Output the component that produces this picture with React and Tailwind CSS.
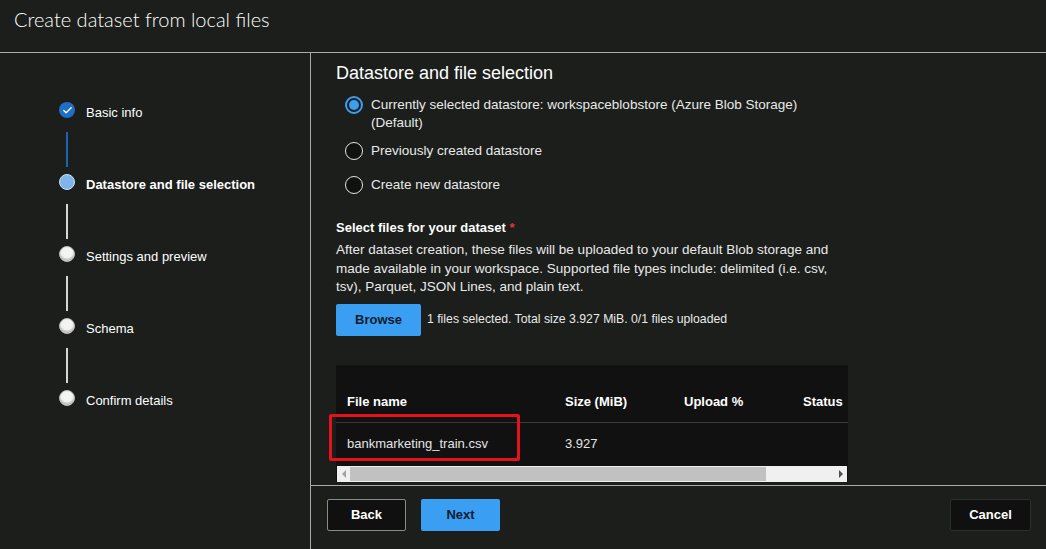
import { Check } from 'lucide-react';

const steps = [
  { label: 'Basic info', state: 'done' },
  { label: 'Datastore and file selection', state: 'current' },
  { label: 'Settings and preview', state: 'todo' },
  { label: 'Schema', state: 'todo' },
  { label: 'Confirm details', state: 'todo' },
];

const radios = [
  { label: 'Currently selected datastore: workspaceblobstore (Azure Blob Storage) (Default)', checked: true, gap: 'mt-0' },
  { label: 'Previously created datastore', checked: false, gap: 'mt-[10px]' },
  { label: 'Create new datastore', checked: false, gap: 'mt-[16px]' },
];

function StepDot({ state }) {
  if (state === 'done') {
    return (
      <span className="w-[16px] h-[16px] rounded-full bg-[#1f6fc4] flex items-center justify-center">
        <Check size={11} strokeWidth={3} color="#fff" />
      </span>
    );
  }
  if (state === 'current') {
    return <span className="w-[16px] h-[16px] rounded-full bg-[#7db4ea] border border-[#cfe3f7]" />;
  }
  return <span className="w-[16px] h-[16px] rounded-full bg-[#f4f4f4] border border-[#b9b9b9] shadow-[inset_0_-2px_2px_rgba(0,0,0,0.25)]" />;
}

function Radio({ checked }) {
  return checked ? (
    <span className="w-[18px] h-[18px] shrink-0 rounded-full border-2 border-[#3a9ff2] flex items-center justify-center">
      <span className="w-[10px] h-[10px] rounded-full bg-[#3a9ff2]" />
    </span>
  ) : (
    <span className="w-[18px] h-[18px] shrink-0 rounded-full border border-[#e6e6e6] bg-[#111]" />
  );
}

export default function App() {
  return (
    <div
      className="w-[1046px] h-[549px] bg-[#1b1e1b] text-white flex flex-col overflow-hidden"
      style={{ fontFamily: '"Liberation Sans", Arial, sans-serif' }}
    >
      {/* header */}
      <div className="h-[53px] border-b border-[#a9aaa8] pl-[14px] pt-[5px]">
        <h1 className="text-[20px] font-light leading-[28px]" style={{ fontFamily: 'Lato, sans-serif' }}>
          Create dataset from local files
        </h1>
      </div>

      <div className="flex flex-1 min-h-0">
        {/* sidebar steps */}
        <div className="w-[311px] border-r border-[#a9aaa8] pl-[59px] pt-[49px]">
          {steps.map((s, i) => (
            <div key={s.label}>
              <div className="flex items-center h-[16px]">
                <StepDot state={s.state} />
                <span className={`ml-[11px] text-[13px] mt-[6px] ${s.state === 'current' ? 'font-bold' : ''}`}>
                  {s.label}
                </span>
              </div>
              {i < steps.length - 1 && (
                <div
                  className={`ml-[7px] w-[2px] h-[35px] mt-[14px] mb-[7px] ${
                    i === 0 ? 'bg-[#1d62b3]' : 'bg-[#d6d6d6]'
                  }`}
                />
              )}
            </div>
          ))}
        </div>

        {/* main */}
        <div className="flex-1 flex flex-col min-w-0">
          <div className="flex-1 pl-[25px] pt-[8px]">
            <h2 className="text-[18px] leading-[25px]">Datastore and file selection</h2>

            <div className="mt-[10px] pl-[9px] flex flex-col">
              {radios.map((r) => (
                <label
                  key={r.label}
                  className={`flex items-start gap-[8px] text-[13.5px] leading-[18px] text-[#e9e9e9] ${r.gap}`}
                >
                  <Radio checked={r.checked} />
                  <span className="w-[440px]">{r.label}</span>
                </label>
              ))}
            </div>

            <div className="mt-[25px] w-[512px]">
              <div className="text-[13px] font-bold leading-[18px]">
                Select files for your dataset <span className="text-[#e0343a]">*</span>
              </div>
              <p className="mt-[4px] text-[13.5px] leading-[18.5px] text-[#e9e9e9]">
                After dataset creation, these files will be uploaded to your default Blob storage and made available in
                your workspace. Supported file types include: delimited (i.e. csv, tsv), Parquet, JSON Lines, and plain
                text.
              </p>
              <div className="mt-[7px] flex items-center gap-[6px]">
                <button className="w-[85px] h-[32px] rounded-[2px] bg-[#3a9ff2] text-[13px] text-[#0e1b2c] font-bold">
                  Browse
                </button>
                <span className="text-[12.25px] text-[#e9e9e9]">1 files selected. Total size 3.927 MiB. 0/1 files uploaded</span>
              </div>

              {/* file table */}
              <div className="relative mt-[29px] bg-[#111111] h-[117px]">
                <div className="overflow-hidden">
                  <div className="w-[560px]">
                    <div className="flex items-end h-[58px] pb-[10px] border-b border-[#3a3a3a] text-[13px] font-bold">
                      <span className="w-[229px] pl-[11px]">File name</span>
                      <span className="w-[119px]">Size (MiB)</span>
                      <span className="w-[119px]">Upload %</span>
                      <span>Status</span>
                    </div>
                    <div className="flex items-center h-[43px] text-[13px] text-[#e4e4e4]">
                      <span className="w-[229px] pl-[11px]">bankmarketing_train.csv</span>
                      <span className="w-[119px]">3.927</span>
                    </div>
                  </div>
                </div>
                {/* horizontal scrollbar */}
                <div className="mx-[1px] h-[16px] bg-[#f0f0f0] flex items-center">
                  <span className="w-[13px] flex justify-center">
                    <span className="w-0 h-0 border-y-[4px] border-y-transparent border-r-[4px] border-r-[#a3a3a3]" />
                  </span>
                  <span className="w-[416px] h-[14px] bg-[#c1c1c1]" />
                  <span className="flex-1" />
                  <span className="w-[13px] flex justify-center">
                    <span className="w-0 h-0 border-y-[4px] border-y-transparent border-l-[4px] border-l-[#505050]" />
                  </span>
                </div>
                {/* highlight box */}
                <div className="absolute left-[-7px] top-[49px] w-[191px] h-[47px] border-[3px] border-[#e5121b] rounded-[2px]" />
              </div>
            </div>
          </div>

          {/* footer */}
          <div className="h-[64px] border-t border-[#a9aaa8] flex items-start pt-[13px] pl-[16px] pr-[15px]">
            <button className="w-[79px] h-[32px] bg-[#101010] border border-[#8a8a8a] rounded-[2px] text-[13px] font-bold">
              Back
            </button>
            <button className="ml-[15px] w-[79px] h-[32px] bg-[#3a9ff2] rounded-[2px] text-[13px] font-bold text-[#0e1b2c]">
              Next
            </button>
            <button className="ml-auto w-[81px] h-[32px] bg-[#101010] border border-[#2e2e2e] rounded-[2px] text-[13px] font-bold">
              Cancel
            </button>
          </div>
        </div>
      </div>
    </div>
  );
}
